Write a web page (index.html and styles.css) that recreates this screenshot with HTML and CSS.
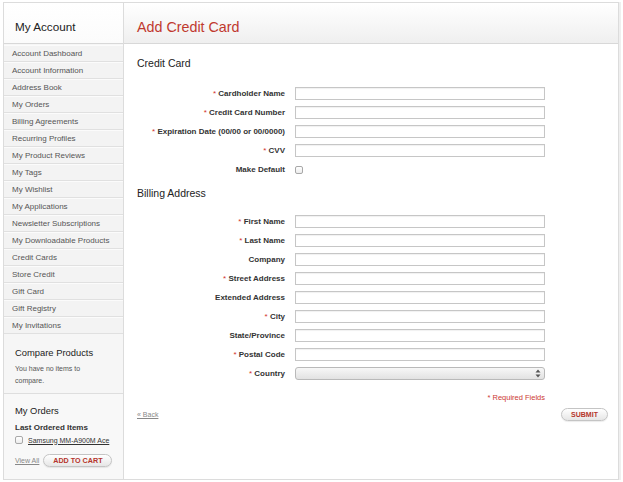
FILE: index.html
```html
<!DOCTYPE html>
<html>
<head>
<meta charset="utf-8">
<title>Add Credit Card</title>
<link rel="stylesheet" href="styles.css">
</head>
<body>
<div class="wrap">
  <aside class="side">
    <div class="side-head"><h2 class="side-title">My Account</h2></div>
    <ul class="nav">
      <li>Account Dashboard</li>
      <li>Account Information</li>
      <li>Address Book</li>
      <li>My Orders</li>
      <li>Billing Agreements</li>
      <li>Recurring Profiles</li>
      <li>My Product Reviews</li>
      <li>My Tags</li>
      <li>My Wishlist</li>
      <li>My Applications</li>
      <li>Newsletter Subscriptions</li>
      <li>My Downloadable Products</li>
      <li>Credit Cards</li>
      <li>Store Credit</li>
      <li>Gift Card</li>
      <li>Gift Registry</li>
      <li>My Invitations</li>
    </ul>
    <div class="block compare">
      <h3 class="block-title">Compare Products</h3>
      <p class="block-text">You have no items to<br>compare.</p>
    </div>
    <div class="block orders">
      <h3 class="block-title">My Orders</h3>
      <div class="sub-title">Last Ordered Items</div>
      <div class="order-item"><input type="checkbox" class="cb"><a class="item-link">Samsung MM-A900M Ace</a></div>
      <div class="order-actions"><a class="view-all">View All</a><button class="btn btn-cart">ADD TO CART</button></div>
    </div>
  </aside>
  <main class="main">
    <div class="main-head"><h1 class="page-title">Add Credit Card</h1></div>
    <div class="content">
      <h2 class="section-title first">Credit Card</h2>
      <div class="form">
        <div class="row"><label class="lbl"><span class="req">*</span> Cardholder Name</label><input class="txt" type="text"></div>
        <div class="row"><label class="lbl"><span class="req">*</span> Credit Card Number</label><input class="txt" type="text"></div>
        <div class="row"><label class="lbl"><span class="req">*</span> Expiration Date (00/00 or 00/0000)</label><input class="txt" type="text"></div>
        <div class="row"><label class="lbl"><span class="req">*</span> CVV</label><input class="txt" type="text"></div>
        <div class="row"><label class="lbl">Make Default</label><input type="checkbox" class="cb"></div>
      </div>
      <h2 class="section-title second">Billing Address</h2>
      <div class="form">
        <div class="row"><label class="lbl"><span class="req">*</span> First Name</label><input class="txt" type="text"></div>
        <div class="row"><label class="lbl"><span class="req">*</span> Last Name</label><input class="txt" type="text"></div>
        <div class="row"><label class="lbl">Company</label><input class="txt" type="text"></div>
        <div class="row"><label class="lbl"><span class="req">*</span> Street Address</label><input class="txt" type="text"></div>
        <div class="row"><label class="lbl">Extended Address</label><input class="txt" type="text"></div>
        <div class="row"><label class="lbl"><span class="req">*</span> City</label><input class="txt" type="text"></div>
        <div class="row"><label class="lbl">State/Province</label><input class="txt" type="text"></div>
        <div class="row"><label class="lbl"><span class="req">*</span> Postal Code</label><input class="txt" type="text"></div>
        <div class="row"><label class="lbl"><span class="req">*</span> Country</label>
          <span class="sel-wrap"><select class="sel"><option></option></select>
            <svg class="sel-arrows" width="6" height="9" viewBox="0 0 6 9"><path d="M3 0.5 L5.5 3.5 L0.5 3.5 Z M3 8.5 L5.5 5.5 L0.5 5.5 Z" fill="#555"/></svg>
          </span>
        </div>
        <div class="required">* Required Fields</div>
      </div>
      <div class="actions"><a class="back">« Back</a><button class="btn btn-submit">SUBMIT</button></div>
    </div>
  </main>
</div>
</body>
</html>
```
FILE: styles.css
```css
* { box-sizing: border-box; }
html, body { margin: 0; padding: 0; background: #fff; }
body { font-family: "Liberation Sans", Arial, Helvetica, sans-serif; color: #333; }
h1, h2, h3, p, ul { margin: 0; padding: 0; font-weight: normal; }

.wrap {
  margin: 2px 0 0 3px;
  width: 616px;
  height: 478px;
  border: 1px solid #dcdcdc;
  display: flex;
  box-shadow: 2px 0 0 #efefef;
}

.side {
  width: 120px;
  border-right: 1px solid #dcdcdc;
  background: #f6f6f6;
  display: flex;
  flex-direction: column;
}
.side-head {
  height: 41px;
  border-bottom: 1px solid #d8d8d8;
  background: linear-gradient(#ffffff, #fbfbfb);
  padding: 16px 0 0 11px;
}
.side-title { font-size: 11.7px; line-height: 16px; color: #222; }

.nav { list-style: none; margin-top: 1px; }
.nav li {
  height: 17px;
  line-height: 16px;
  padding-top: 1px;
  font-size: 8px;
  color: #555;
  padding-left: 8px;
  background: #f3f3f3;
  border-bottom: 1px solid #e0e0e0;
  box-shadow: inset 0 1px 0 #fbfbfb;
}

.block { padding-left: 11px; }
.compare {
  height: 60px;
  padding-top: 12px;
  border-bottom: 1px solid #dedede;
  background: #f6f6f6;
}
.block-title { font-size: 9.4px; line-height: 14px; color: #222; }
.block-text { font-size: 7px; line-height: 12px; color: #555; margin-top: 3px; }

.orders { padding-top: 10px; background: #f8f8f8; flex: 1; }
.sub-title { font-size: 8px; font-weight: bold; line-height: 12px; margin-top: 4px; color: #333; }
.order-item { display: flex; align-items: center; height: 12px; }
.order-item .cb { margin-right: 5px; }
.item-link { font-size: 7px; color: #333; text-decoration: underline; }
.order-actions { display: flex; align-items: center; margin-top: 8px; }
.view-all { font-size: 7px; color: #888; text-decoration: underline; margin-right: 4px; }

.cb {
  -webkit-appearance: none;
  appearance: none;
  width: 8px;
  height: 8px;
  margin: 0;
  border: 1px solid #a8a8a8;
  border-radius: 2px;
  background: linear-gradient(#fff, #ececec);
}

.btn {
  -webkit-appearance: none;
  appearance: none;
  height: 13px;
  padding: 0;
  border: 1px solid #c4c4c4;
  border-radius: 7px;
  background: linear-gradient(#ffffff, #e6e6e6);
  color: #b5352b;
  font-family: "Liberation Sans", Arial, sans-serif;
  font-weight: bold;
  font-size: 7.2px;
  line-height: 11px;
  box-shadow: 0 1px 1px rgba(0,0,0,0.08);
}
.btn-cart { width: 69px; }
.btn-submit { width: 47px; font-size: 7px; }

.main { flex: 1; display: flex; flex-direction: column; }
.main-head {
  height: 41px;
  border-bottom: 1px solid #d8d8d8;
  background: linear-gradient(#ffffff, #efefef);
  padding: 15px 0 0 13px;
}
.page-title { font-size: 14.3px; line-height: 18px; color: #c0392e; }

.content { padding: 0 10px 0 13px; }
.section-title { font-size: 10.5px; line-height: 14px; color: #222; }
.section-title.first { margin-top: 12px; margin-bottom: 17px; }
.section-title.second { margin-top: 10px; margin-bottom: 15px; }

.form { width: 408px; display: flex; flex-direction: column; gap: 6px; }
.row { display: flex; align-items: center; height: 13px; gap: 10px; }
.lbl {
  width: 148px;
  text-align: right;
  font-size: 8px;
  font-weight: bold;
  color: #333;
  white-space: nowrap;
}
.req { color: #d2322d; font-weight: normal; }
.txt {
  width: 250px;
  height: 13px;
  margin: 0;
  padding: 0 3px;
  border: 1px solid #c6c6c6;
  box-shadow: inset 0 1px 1px rgba(0,0,0,0.06);
  background: #fff;
  font-size: 8px;
}
.sel-wrap { position: relative; width: 250px; height: 13px; display: block; }
.sel {
  -webkit-appearance: none;
  appearance: none;
  width: 250px;
  height: 13px;
  margin: 0;
  border: 1px solid #b9b9b9;
  border-radius: 3px;
  background: linear-gradient(#f7f7f7, #e2e2e2);
  display: block;
}
.sel-arrows { position: absolute; right: 4px; top: 2px; }

.required {
  margin-top: 6px;
  text-align: right;
  font-size: 7.5px;
  line-height: 12px;
  color: #cc3a33;
}
.actions {
  margin-top: 4px;
  display: flex;
  justify-content: space-between;
  align-items: center;
}
.back { font-size: 7px; color: #888; text-decoration: underline; }
```
